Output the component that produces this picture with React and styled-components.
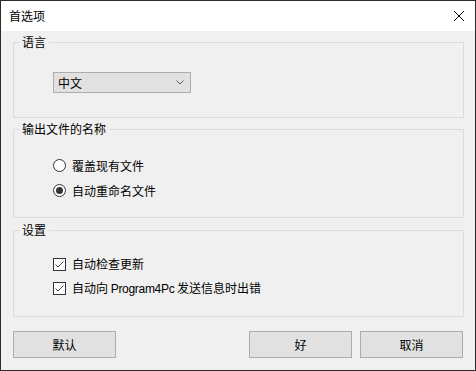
import React from "react";
import styled, { createGlobalStyle } from "styled-components";

const Global = createGlobalStyle`
  html, body { margin: 0; padding: 0; background: #ffffff; }
  * { box-sizing: border-box; }
  body { font-family: "Noto Sans CJK SC", "Noto Sans", sans-serif; font-size: 12px; color: #000; }
`;

const Window = styled.div`
  width: 476px;
  height: 371px;
  border: 1px solid #2b2b2b;
  display: flex;
  flex-direction: column;
  background: #f0f0f0;
`;

const TitleBar = styled.div`
  height: 30px;
  background: #ffffff;
  display: flex;
  align-items: center;
  justify-content: space-between;
  padding: 0 9px 0 8px;
`;

const Title = styled.span`
  font-size: 12px;
  line-height: 16px;
`;

const Close = styled.svg`
  width: 12px;
  height: 12px;
  margin-right: 1px;
`;

const Body = styled.div`
  flex: 1;
  display: flex;
  flex-direction: column;
  padding: 11px 11px 0 12px;
`;

const Group = styled.div`
  position: relative;
  height: ${(p) => p.$h}px;
  margin-bottom: ${(p) => p.$mb}px;
  border: 1px solid #dcdcdc;
  padding: ${(p) => p.$pt}px 0 0 39px;
  display: flex;
  flex-direction: column;
`;

const Legend = styled.span`
  position: absolute;
  left: 5px;
  top: -9px;
  padding: 0 3px;
  background: #f0f0f0;
  line-height: 16px;
`;

const Combo = styled.div`
  width: 138px;
  height: 21px;
  background: #e1e1e1;
  border: 1px solid #adadad;
  display: flex;
  align-items: center;
  justify-content: space-between;
  padding: 0 6px 0 4px;
`;

const Row = styled.label`
  height: ${(p) => p.$h}px;
  display: flex;
  align-items: center;
  gap: ${(p) => p.$gap}px;
  line-height: 16px;
  white-space: pre;
`;

const Latin = styled.span`
  font-family: "Liberation Sans", Arial, sans-serif;
  letter-spacing: -0.3px;
`;

const Radio = styled.span`
  width: 13px;
  height: 13px;
  border-radius: 50%;
  border: 1px solid #333;
  background: #fff;
  display: flex;
  align-items: center;
  justify-content: center;
  &::after {
    content: "";
    width: 7px;
    height: 7px;
    border-radius: 50%;
    background: ${(p) => (p.$on ? "#333" : "transparent")};
  }
`;

const Check = styled.span`
  width: 13px;
  height: 13px;
  border: 1px solid #333;
  background: #fff;
  display: flex;
  align-items: center;
  justify-content: center;
`;

const Buttons = styled.div`
  margin-top: 14px;
  display: flex;
  align-items: center;
`;

const Button = styled.button`
  width: 103px;
  height: 27px;
  background: #e1e1e1;
  border: 1px solid #adadad;
  font-family: inherit;
  font-size: 12px;
  color: #000;
  padding: 0;
  margin-left: ${(p) => p.$ml || 0}px;
`;

const Chevron = () => (
  <svg width="8" height="5" viewBox="0 0 8 5">
    <path d="M0.5 0.5 L4 4 L7.5 0.5" fill="none" stroke="#606060" strokeWidth="1" />
  </svg>
);

const Tick = () => (
  <svg width="11" height="11" viewBox="0 0 11 11">
    <path d="M1.5 5.5 L4 8 L9.5 2.5" fill="none" stroke="#444" strokeWidth="1" />
  </svg>
);

export default function App() {
  return (
    <>
      <Global />
      <Window>
        <TitleBar>
          <Title>首选项</Title>
          <Close viewBox="0 0 12 12">
            <path d="M1 1 L11 11 M11 1 L1 11" stroke="#000" strokeWidth="1" />
          </Close>
        </TitleBar>
        <Body>
          <Group $h={76} $mb={11} $pt={29}>
            <Legend>语言</Legend>
            <Combo>
              <span>中文</span>
              <Chevron />
            </Combo>
          </Group>
          <Group $h={89} $mb={12} $pt={23}>
            <Legend>输出文件的名称</Legend>
            <Row $h={25} $gap={6}>
              <Radio />
              <span>覆盖现有文件</span>
            </Row>
            <Row $h={25} $gap={6}>
              <Radio $on />
              <span>自动重命名文件</span>
            </Row>
          </Group>
          <Group $h={87} $mb={0} $pt={21}>
            <Legend>设置</Legend>
            <Row $h={24} $gap={6}>
              <Check><Tick /></Check>
              <span>自动检查更新</span>
            </Row>
            <Row $h={24} $gap={6}>
              <Check><Tick /></Check>
              <span>自动向 <Latin>Program4Pc</Latin> 发送信息时出错</span>
            </Row>
          </Group>
          <Buttons>
            <Button>默认</Button>
            <Button $ml={133}>好</Button>
            <Button $ml={8}>取消</Button>
          </Buttons>
        </Body>
      </Window>
    </>
  );
}
